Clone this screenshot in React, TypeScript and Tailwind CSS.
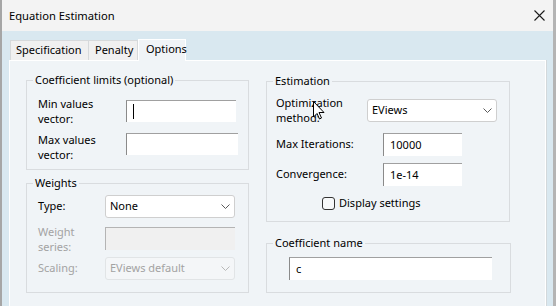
import React from "react";

const Chevron = ({ color = "#5a5a5a" }: { color?: string }) => (
  <svg width="9" height="5" viewBox="0 0 9 5" className="shrink-0">
    <path d="M0.5 0.5 L4.5 4.5 L8.5 0.5" fill="none" stroke={color} strokeWidth="1" />
  </svg>
);

const TextBox = ({ className = "", children }: { className?: string; children?: React.ReactNode }) => (
  <div
    className={`flex items-center bg-white border-t border-l border-t-[#a0a0a0] border-l-[#8a8a8a] pl-[6px] text-black ${className}`}
  >
    {children}
  </div>
);

const Select = ({
  className = "",
  text,
  disabled = false,
}: {
  className?: string;
  text: string;
  disabled?: boolean;
}) => (
  <div
    className={`flex items-center justify-between rounded-[3px] border pl-[4px] pr-[4px] ${
      disabled ? "border-[#e1e4e6] bg-[#f4f6f8] text-[#a3a3a3]" : "border-[#cfcfcf] bg-white text-black"
    } ${className}`}
  >
    <span>{text}</span>
    <Chevron color={disabled ? "#b8b8b8" : "#5a5a5a"} />
  </div>
);

const Group = ({
  title,
  className = "",
  children,
}: {
  title: string;
  className?: string;
  children?: React.ReactNode;
}) => (
  <fieldset className={`border border-[#d9dcdf] p-0 m-0 min-w-0 ${className}`}>
    <legend className="ml-[6px] px-[2px] leading-[16px] text-black">{title}</legend>
    {children}
  </fieldset>
);

export default function App() {
  return (
    <div className="w-[556px] h-[306px] overflow-hidden flex flex-col border-l-[2px] border-r-[3px] border-l-[#a6a6a6] border-r-[#b4b4b4] bg-[#d9e8f0] font-['Noto_Sans','DejaVu_Sans',sans-serif] text-[11px] text-black relative">
      {/* Title bar */}
      <div className="h-[31px] shrink-0 bg-[#f3f3f3] flex items-center justify-between pl-[7px] pr-[8px]">
        <span className="text-[11.2px] leading-none pt-[1px]">Equation Estimation</span>
        <svg width="11" height="11" viewBox="0 0 11 11">
          <path d="M0.5 0.5 L10.5 10.5 M10.5 0.5 L0.5 10.5" stroke="#1a1a1a" strokeWidth="1.1" />
        </svg>
      </div>

      {/* Tabs */}
      <div className="flex items-end pl-[8px] pt-[8px] shrink-0">
        <div className="h-[20px] w-[79px] border border-b-0 border-[#d6d9db] bg-[#f0f0f0] flex items-center pl-[5px]">
          Specification
        </div>
        <div className="h-[20px] w-[49px] border border-b-0 border-l-0 border-[#d6d9db] bg-[#f0f0f0] flex items-center pl-[6px]">
          Penalty
        </div>
        <div className="h-[22px] w-[48px] border border-b-0 border-[#ffffff] bg-[#f0f4f7] flex items-center pl-[7px] pb-[2px] -mb-[1px] relative z-10">
          Options
        </div>
      </div>

      {/* Panel */}
      <div className="ml-[7px] w-[537px] flex-1 bg-[#f0f4f7] border border-b-0 border-white shadow-[1px_0_0_#d3d8db] flex gap-[17px] pl-[16px]">
        {/* Left column */}
        <div className="w-[223px] flex flex-col">
          <Group title="Coefficient limits (optional)" className="mt-[11px] h-[98px]">
            <div className="pl-[11px] flex flex-col">
              <div className="flex items-start mt-[8px]">
                <div className="w-[88px] leading-[15px]">
                  Min values
                  <br />
                  vector:
                </div>
                <TextBox className="mt-[4px] h-[22px] w-[110px]">
                  <span className="w-[1px] h-[15px] bg-black" />
                </TextBox>
              </div>
              <div className="flex items-start mt-[6px]">
                <div className="w-[88px] leading-[15px]">
                  Max values
                  <br />
                  vector:
                </div>
                <TextBox className="mt-[1px] h-[22px] w-[112px]" />
              </div>
            </div>
          </Group>

          <Group title="Weights" className="mt-[5px] h-[118px]">
            <div className="pl-[11px] flex flex-col">
              <div className="flex items-center mt-[4px]">
                <div className="w-[67px]">Type:</div>
                <Select className="h-[23px] w-[130px]" text="None" />
              </div>
              <div className="flex items-start mt-[6px]">
                <div className="w-[67px] leading-[15px] text-[#a3a3a3]">
                  Weight
                  <br />
                  series:
                </div>
                <div className="mt-[3px] h-[23px] w-[130px] bg-[#f0f0f0] border-t border-l border-[#b4b4b4]" />
              </div>
              <div className="flex items-center mt-[3px]">
                <div className="w-[67px] text-[#a3a3a3]">Scaling:</div>
                <Select className="h-[23px] w-[130px]" text="EViews default" disabled />
              </div>
            </div>
          </Group>
        </div>

        {/* Right column */}
        <div className="w-[245px] flex flex-col">
          <Group title="Estimation" className="mt-[12px] h-[149px] w-[244px]">
            <div className="pl-[9px] flex flex-col">
              <div className="flex items-start mt-[6px]">
                <div className="w-[91px] leading-[15px] relative">
                  Optimization
                  <br />
                  method:
                  <svg
                    className="absolute left-[37px] top-[6px]"
                    width="12"
                    height="19"
                    viewBox="0 0 12 19"
                  >
                    <path
                      d="M0.5 0.5 L0.5 16 L4 12.5 L6.5 18 L8.5 17 L6 11.5 L11 11.5 Z"
                      fill="white"
                      stroke="black"
                      strokeWidth="1"
                      strokeLinejoin="round"
                    />
                  </svg>
                </div>
                <Select className="mt-[4px] h-[23px] w-[130px]" text="EViews" />
              </div>
              <div className="flex items-center mt-[8px]">
                <div className="w-[107px]">Max Iterations:</div>
                <TextBox className="h-[23px] w-[79px]">10000</TextBox>
              </div>
              <div className="flex items-center mt-[7px]">
                <div className="w-[107px]">Convergence:</div>
                <TextBox className="h-[23px] w-[79px]">1e-14</TextBox>
              </div>
              <div className="flex items-center mt-[9px] ml-[46px] gap-[4px] h-[16px]">
                <span className="w-[13px] h-[13px] rounded-[3px] border border-[#333333] bg-[#f7f9fa]" />
                <span>Display settings</span>
              </div>
            </div>
          </Group>

          <Group title="Coefficient name" className="mt-[13px] h-[58px] w-[245px]">
            <div className="pl-[22px] pt-[6px]">
              <TextBox className="h-[23px] w-[203px]">c</TextBox>
            </div>
          </Group>
        </div>
      </div>
    </div>
  );
}
